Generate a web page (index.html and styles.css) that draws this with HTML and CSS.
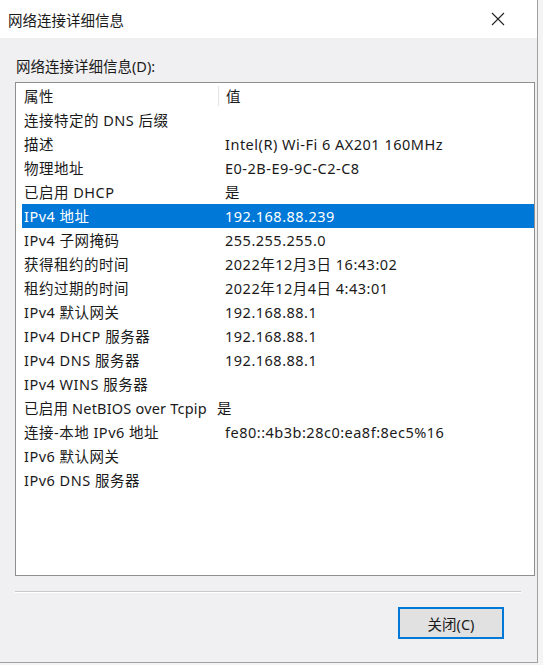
FILE: index.html
```html
<!DOCTYPE html>
<html lang="zh-CN">
<head>
<meta charset="utf-8">
<title>网络连接详细信息</title>
<link rel="stylesheet" href="styles.css">
</head>
<body>
<div class="window">
  <div class="titlebar">
    <span class="title">网络连接详细信息</span>
    <svg class="close" width="14" height="14" viewBox="0 0 14 14"><path d="M1 1 L13 13 M13 1 L1 13" stroke="#222" stroke-width="1.1" fill="none"/></svg>
  </div>
  <div class="content">
    <div class="label">网络连接详细信息(D):</div>
    <div class="list">
      <div class="row header"><span class="c1">属性</span><span class="c2">值</span></div>
      <div class="row"><span class="c1">连接特定的 DNS 后缀</span><span class="c2"></span></div>
      <div class="row"><span class="c1">描述</span><span class="c2">Intel(R) Wi-Fi 6 AX201 160MHz</span></div>
      <div class="row"><span class="c1">物理地址</span><span class="c2">E0-2B-E9-9C-C2-C8</span></div>
      <div class="row"><span class="c1">已启用 DHCP</span><span class="c2">是</span></div>
      <div class="row selected"><span class="c1">IPv4 地址</span><span class="c2">192.168.88.239</span></div>
      <div class="row"><span class="c1">IPv4 子网掩码</span><span class="c2">255.255.255.0</span></div>
      <div class="row"><span class="c1">获得租约的时间</span><span class="c2">2022年12月3日 16:43:02</span></div>
      <div class="row"><span class="c1">租约过期的时间</span><span class="c2">2022年12月4日 4:43:01</span></div>
      <div class="row"><span class="c1">IPv4 默认网关</span><span class="c2">192.168.88.1</span></div>
      <div class="row"><span class="c1">IPv4 DHCP 服务器</span><span class="c2">192.168.88.1</span></div>
      <div class="row"><span class="c1">IPv4 DNS 服务器</span><span class="c2">192.168.88.1</span></div>
      <div class="row"><span class="c1">IPv4 WINS 服务器</span><span class="c2"></span></div>
      <div class="row"><span class="c1 narrow">已启用 NetBIOS over Tcpip</span><span class="c2 tight">是</span></div>
      <div class="row"><span class="c1">连接-本地 IPv6 地址</span><span class="c2">fe80::4b3b:28c0:ea8f:8ec5%16</span></div>
      <div class="row"><span class="c1">IPv6 默认网关</span><span class="c2"></span></div>
      <div class="row"><span class="c1">IPv6 DNS 服务器</span><span class="c2"></span></div>
    </div>
    <div class="sep"></div>
    <div class="actions">
      <button class="btn">关闭(C)</button>
    </div>
  </div>
</div>
</body>
</html>
```
FILE: styles.css
```css
html, body {
  margin: 0;
  padding: 0;
  background: #f4f4f4;
}
body {
  font-family: "Noto Sans", "Noto Sans CJK SC", "Microsoft YaHei", sans-serif;
  font-size: 14.5px;
  color: #1a1a1a;
}
.window {
  width: 537px;
  height: 662px;
  background: #f0eff1;
  border-right: 1px solid #a0a0a0;
  border-bottom: 1px solid #a0a0a0;
  display: flex;
  flex-direction: column;
}
.titlebar {
  height: 38px;
  background: #ffffff;
  display: flex;
  align-items: center;
  justify-content: space-between;
  padding: 0 32px 0 8px;
}
.title {
  font-size: 14.5px;
  color: #1a1a1a;
}
.close {
  display: block;
}
.content {
  padding: 17px 15px 0 15px;
  display: flex;
  flex-direction: column;
}
.label {
  height: 27px;
  line-height: 23px;
  padding-left: 1px;
}
.list {
  width: 506px;
  height: 491px;
  background: #ffffff;
  border: 1px solid #8f8f8f;
  padding: 1px 6px 0 6px;
  box-sizing: content-box;
  letter-spacing: 0.5px;
}
.row {
  display: flex;
  height: 24px;
  line-height: 24px;
  white-space: nowrap;
}
.row .c1 {
  width: 194px;
  padding-left: 2px;
  flex: none;
}
.row .c1.narrow {
  letter-spacing: 0.2px;
}
.row .c2 {
  padding-left: 7px;
}
.row .c2.tight {
  padding-left: 0;
  margin-left: -1px;
}
.row.header .c1 {
  border-right: 1px solid #e5e5e5;
  margin: 2px 0;
  line-height: 20px;
}
.row.header .c2 {
  line-height: 24px;
}
.row.selected {
  background: #0078d7;
  color: #ffffff;
  margin-right: -6px;
}
.sep {
  margin-top: 15px;
  width: 506px;
  height: 1px;
  background: #c8c8c8;
  border-bottom: 1px solid #ffffff;
}
.actions {
  display: flex;
  justify-content: flex-end;
  padding: 14px 18px 0 0;
}
.btn {
  width: 106px;
  height: 32px;
  background: #e1e1e1;
  border: 2px solid #0078d7;
  font-family: inherit;
  font-size: 14.5px;
  color: #1a1a1a;
  padding: 0;
}
```
